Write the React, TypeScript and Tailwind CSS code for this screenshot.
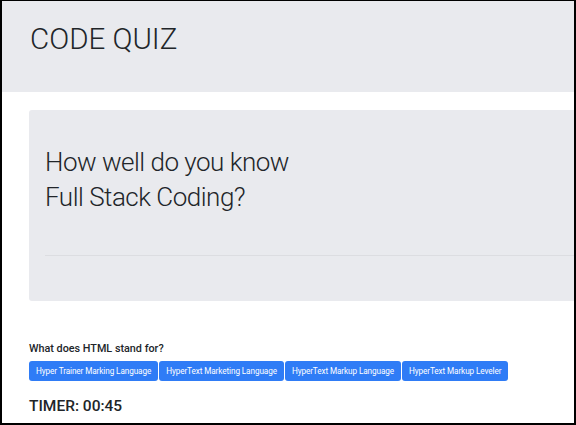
import React from "react";

const answers: string[] = [
  "Hyper Trainer Marking Language",
  "HyperText Marketing Language",
  "HyperText Markup Language",
  "HyperText Markup Leveler",
];

export default function App() {
  return (
    <main className="h-[425px] w-[576px] overflow-hidden border-2 border-t border-black bg-white text-[#212529] font-['Roboto',sans-serif]">
      {/* Header */}
      <header className="h-[91px] bg-[#e9eaee] pl-[28px] pt-[20px]">
        <h1 className="text-[29.5px] font-light leading-[36px]">CODE QUIZ</h1>
      </header>

      {/* Jumbotron */}
      <section className="ml-[27px] mt-[18px] h-[191px] rounded-l-[3px] bg-[#e9eaee] pl-4 pt-[35px]">
        <p className="text-[26px] font-light leading-[35px] tracking-[-0.5px]">
          How well do you know
          <br />
          Full Stack Coding?
        </p>
        <hr className="mt-[40px] border-t border-[#dcdde1]" />
      </section>

      {/* Question */}
      <section className="ml-[27px] mt-[41px]">
        <p className="text-[10.8px] font-medium leading-[14px]">What does HTML stand for?</p>
        <div className="mt-[5px] flex gap-[1px]">
          {answers.map((a) => (
            <button
              key={a}
              className="h-[20px] shrink-0 whitespace-nowrap rounded-[3px] bg-[#2f7cf6] px-[7px] text-[8.2px] leading-[20px] tracking-[-0.1px] text-white"
            >
              {a}
            </button>
          ))}
        </div>
        <p className="mt-[15px] text-[15.5px] font-medium leading-[20px]">TIMER: 00:45</p>
      </section>
    </main>
  );
}
